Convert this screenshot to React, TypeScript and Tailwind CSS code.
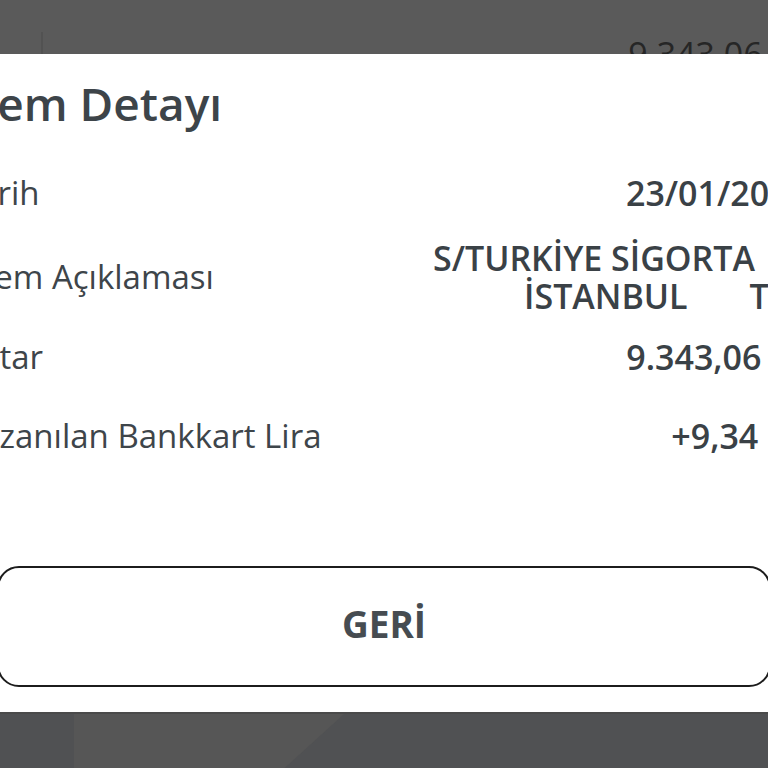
import React from 'react';

const rows = [
  { label: 'Tarih', value: ['23/01/2024'], mt: 'mt-[46px]' },
  { label: 'İşlem Açıklaması', value: ['S/TURKİYE SİGORTA      ', 'İSTANBUL       TR  '], mt: 'mt-[26px]' },
  { label: 'Tutar', value: ['9.343,06 TL'], mt: 'mt-[22px]' },
  { label: 'Kazanılan Bankkart Lira', value: ['+9,34 BL'], mt: 'mt-[39px]' },
];

export default function App() {
  return (
    <div className="w-[768px] h-[768px] overflow-hidden flex flex-col bg-white font-['Open_Sans','Liberation_Sans',sans-serif] text-[#3e454a]">
      {/* dimmed list behind the sheet */}
      <div className="h-[54px] shrink-0 bg-[#5a5a5a] overflow-hidden flex">
        <div className="shrink-0 ml-[41px] mt-[32px] w-[2px] h-[22px] bg-[#525252]" />
        <div className="shrink-0 -ml-[79px] w-[844px] pt-[34px] text-right text-[34px] text-[#262626] leading-[40px]">
          9.343,06 TL
        </div>
      </div>

      {/* sheet */}
      <div className="h-[658px] shrink-0 bg-white flex flex-col overflow-hidden">
        <div className="-ml-[36px] w-[844px] pt-[25px] flex flex-col">
          <h1 className="-ml-[16px] text-[46px] leading-[48px] font-semibold text-[#3d4449] whitespace-nowrap">İşlem Detayı</h1>
          {rows.map((r) => (
            <div key={r.label} className={`${r.mt} flex items-center justify-between`}>
              <span className="-ml-[3px] text-[33px] leading-[40px] whitespace-nowrap">{r.label}</span>
              <div className="flex flex-col items-end text-[34px] leading-[38px] font-semibold text-[#3a4146]">
                {r.value.map((v) => (
                  <span key={v} className="whitespace-pre">{v}</span>
                ))}
              </div>
            </div>
          ))}
        </div>

        <div className="-mx-[3px] mt-[110px]">
          <button className="w-full h-[121px] rounded-[22px] border-2 border-[#1c1c1c] bg-white flex items-center justify-center text-[37px] font-bold text-[#464c51] pb-[6px]">
            GERİ
          </button>
        </div>
      </div>

      {/* bottom bar */}
      <div className="flex-1 bg-[#505153] flex border-t-2 border-[#4a4a4a]">
        <div className="ml-[74px] w-[270px] bg-[#565656] [clip-path:polygon(0_0,100%_0,78%_100%,0_100%)]" />
      </div>
    </div>
  );
}
